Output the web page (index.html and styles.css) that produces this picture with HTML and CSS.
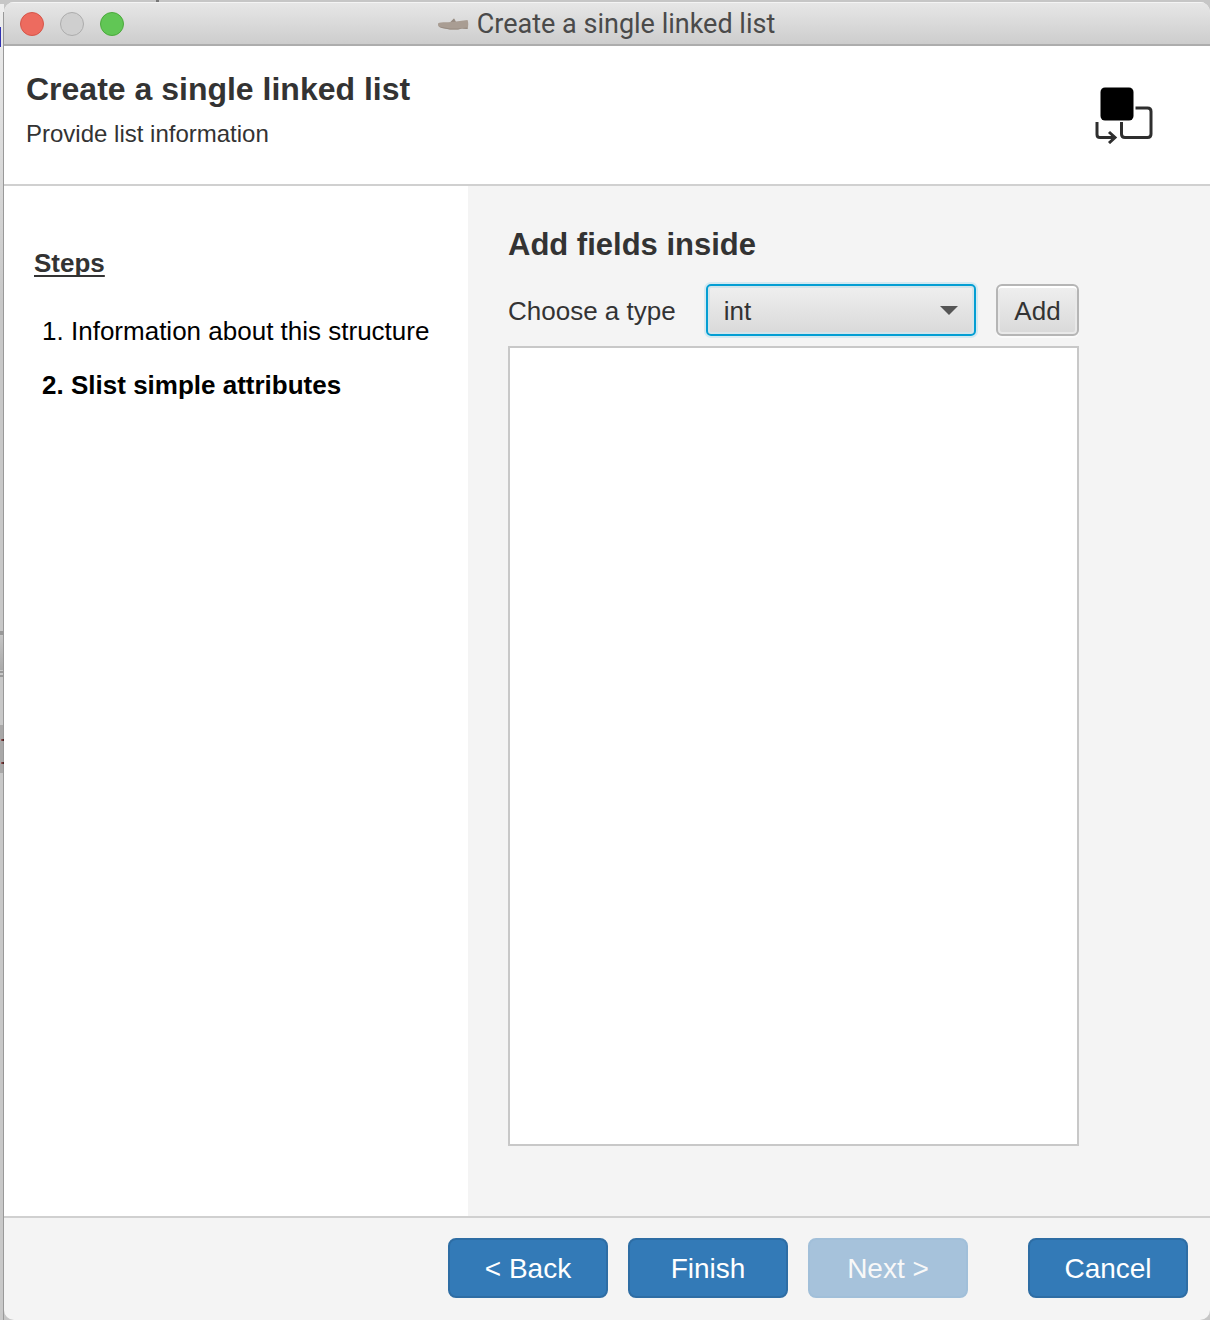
FILE: index.html
```html
<!DOCTYPE html>
<html lang="en">
<head>
<meta charset="utf-8">
<title>Create a single linked list</title>
<link rel="stylesheet" href="styles.css">
</head>
<body>
<div class="window">
  <div class="titlebar">
    <div class="lights">
      <button class="light light-close" type="button" aria-label="Close"></button>
      <button class="light light-minimize" type="button" aria-label="Minimize" disabled></button>
      <button class="light light-zoom" type="button" aria-label="Zoom"></button>
    </div>
    <div class="title">
      <svg class="shoe" width="32" height="12" viewBox="0 0 32 12" aria-hidden="true">
        <path d="M1 5.500C0.500 8 2 9.500 5 10L13 11.500H21L25 10.500L30.500 11C31.500 8 31.500 4 30.500 2L19 3.500L17 .5L13.500 4C9 4.500 3 3.500 1 5.500Z" fill="#a99d93"/>
        <path d="M13.500 4L17 .5L18.500 3.800Z" fill="#988c83"/>
        <path d="M2 8.500L13 10.500H21L30.500 9.500V11L25 10.500L21 11.500H13L5 10Z" fill="#978b82"/>
      </svg>
      <span>Create a single linked list</span>
    </div>
  </div>
  <header class="header">
    <div>
      <h1 class="heading">Create a single linked list</h1>
      <p class="subtitle">Provide list information</p>
    </div>
    <svg class="list-icon" width="60" height="60" viewBox="0 0 60 60" aria-hidden="true">
      <rect x="6.500" y="3.500" width="33" height="33" rx="4.500" fill="#000"/>
      <g fill="none" stroke="#2e2e2e" stroke-width="3">
        <path d="M41.500 24H53.500Q57 24 57 27.500V50Q57 53.500 53.500 53.500H31Q27.500 53.500 27.500 50V38"/>
        <path d="M3 38V50.500Q3 53.500 6 53.500H21"/>
        <path d="M15 48L21 53.500L15 59"/>
      </g>
    </svg>
  </header>
  <div class="content">
    <aside class="sidebar">
      <h2 class="steps-title">Steps</h2>
      <ol class="steps">
        <li>Information about this structure</li>
        <li class="current">Slist simple attributes</li>
      </ol>
    </aside>
    <main class="main">
      <h2 class="heading section-heading">Add fields inside</h2>
      <div class="row">
        <label class="type-label" for="type">Choose a type</label>
        <div class="combo">
          <select id="type" class="type-select">
            <option>int</option>
          </select>
          <svg class="arrow" width="18" height="9" viewBox="0 0 18 9" aria-hidden="true"><path d="M0 0H18L9 9Z" fill="#555"/></svg>
        </div>
        <button class="add" type="button">Add</button>
      </div>
      <div class="fields"></div>
    </main>
  </div>
  <footer class="footer">
    <button class="action" type="button">&lt; Back</button>
    <button class="action" type="button">Finish</button>
    <button class="action" type="button" disabled>Next &gt;</button>
    <button class="action cancel" type="button">Cancel</button>
  </footer>
</div>
</body>
</html>
```
FILE: styles.css
```css
* {
  box-sizing: border-box;
}

body {
  margin: 0;
  min-height: 100vh;
  padding: 2px 0 0 4px;
  display: flex;
  color: #333;
  font: 26px/30px "Liberation Sans", Arial, sans-serif;
  /* slivers of the application behind the dialog */
  background:
    linear-gradient(#3030b0, #3030b0) 0 27px / 1px 20px no-repeat,
    linear-gradient(#777, #777) 156px 0 / 3px 2px no-repeat,
    linear-gradient(90deg, #a66, #311) 1px 739px / 3px 2px no-repeat,
    linear-gradient(90deg, #a66, #311) 1px 762px / 3px 2px no-repeat,
    linear-gradient(90deg, transparent 3px, #999 3px) 0 12px / 4px 100% no-repeat,
    linear-gradient(#a9a8a8, #a9a8a8) 0 725px / 4px 48px no-repeat,
    linear-gradient(#999, #999) 0 675px / 4px 2px no-repeat,
    linear-gradient(#999, #999) 0 671px / 4px 2px no-repeat,
    linear-gradient(#c4c4c4, #aaa) 0 636px / 4px 34px no-repeat,
    linear-gradient(#999, #999) 0 631px / 4px 4px no-repeat,
    linear-gradient(#eee, #c8c8c8 300px) 0 4px / 4px 100% no-repeat,
    #c6c6c6;
}

h1, h2, p, ol {
  margin: 0;
  padding: 0;
}

button, select {
  font: inherit;
  color: inherit;
}

.window {
  flex: 1;
  display: flex;
  flex-direction: column;
  border-radius: 10px;
  overflow: hidden;
  background: #f4f4f4;
}

.titlebar {
  display: grid;
  grid-template-columns: 1fr auto 1fr;
  align-items: center;
  height: 44px;
  padding: 2px 18px 0 16px;
  border-bottom: 2px solid #adadad;
  background: linear-gradient(#e7e7e7, #cdcdcd);
  box-shadow: inset 0 1px #f4f4f4;
}

.lights {
  display: flex;
  gap: 16px;
}

.light {
  width: 24px;
  height: 24px;
  padding: 0;
  border: 1px solid;
  border-radius: 50%;
}

.light-close {
  background: #ed6b5f;
  border-color: #d55549;
}

.light-minimize {
  background: #cfcfcf;
  border-color: #acacac;
}

.light-zoom {
  background: #61c655;
  border-color: #4ca93c;
}

.title {
  display: flex;
  align-items: center;
  gap: 8px;
  color: #4a4a4a;
  font: 27px/30px Roboto, sans-serif;
}

.header {
  display: flex;
  justify-content: space-between;
  align-items: flex-start;
  padding: 23px 56px 34px 22px;
  border-bottom: 2px solid #d0d0d0;
  background: #fff;
}

.heading {
  font-size: 32px;
  line-height: 40px;
}

.section-heading {
  font-size: 31px;
}

.subtitle {
  margin-top: 9px;
  font-size: 24px;
  line-height: 32px;
}

.list-icon {
  margin-top: 15px;
}

.content {
  flex: 1;
  display: flex;
}

.sidebar {
  flex: none;
  width: 464px;
  padding: 62px 30px;
  background: #fff;
}

.steps-title {
  font-size: 26px;
  text-decoration: underline;
  text-decoration-thickness: 2px;
  text-underline-offset: 3px;
  text-decoration-skip-ink: none;
}

.steps {
  display: flex;
  flex-direction: column;
  gap: 24px;
  margin-top: 38px;
  padding-left: 37px;
  color: #000;
}

.current {
  font-weight: bold;
}

.main {
  flex: 1;
  display: flex;
  flex-direction: column;
  padding: 39px 131px 70px 40px;
}

.row {
  display: flex;
  align-items: center;
  margin: 19px 0 10px;
}

.type-label {
  flex: none;
  margin-right: 30px;
  padding-top: 2px;
}

.combo {
  position: relative;
  flex: 1;
}

.type-select {
  display: block;
  appearance: none;
  width: 100%;
  height: 52px;
  padding: 2px 40px 0 16px;
  border: 2px solid #039ed3;
  border-radius: 5px;
  background: linear-gradient(#efefef, #d9d9d9);
  box-shadow: 0 0 0 2px #d3e9f1, inset 0 0 0 2px #d3e4ea;
  outline: none;
}

.arrow {
  position: absolute;
  top: 22px;
  right: 18px;
  pointer-events: none;
}

.add {
  width: 83px;
  height: 52px;
  margin-left: 20px;
  padding: 2px 0 0;
  border: 2px solid #b5b5b5;
  border-radius: 6px;
  background: linear-gradient(#efefef, #d9d9d9);
  box-shadow: inset 0 2px #fff, inset 0 0 0 2px #e9e9e9, 0 2px #fafafa;
}

.fields {
  flex: 1;
  border: 2px solid #c8c8c8;
  background: #fff;
}

.footer {
  display: flex;
  justify-content: flex-end;
  gap: 20px;
  padding: 20px 22px 22px;
  border-top: 2px solid #d0d0d0;
}

.action {
  width: 160px;
  height: 60px;
  padding: 2px 0 0;
  border: 2px solid #2e6da4;
  border-radius: 8px;
  background: #337ab7;
  color: #fff;
  font-size: 28px;
}

.action:disabled {
  border-color: #a1bfd9;
  background: #a6c2db;
  color: #f8f8f8;
}

.cancel {
  margin-left: 40px;
}
```
